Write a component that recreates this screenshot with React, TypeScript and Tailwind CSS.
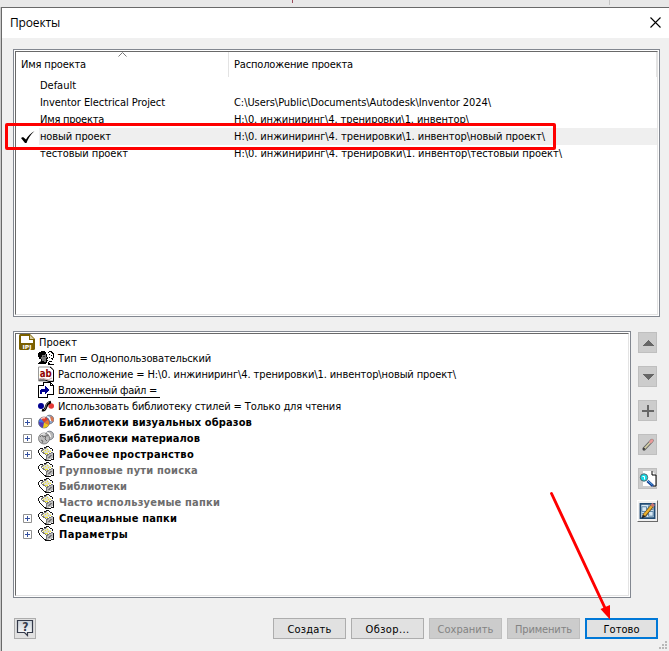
import { useLayoutEffect, useRef, type ReactNode } from "react";

const UI = "[font-family:'DejaVu_Sans_Condensed','DejaVu_Sans',sans-serif] [font-stretch:condensed]";

/* Text run whose letter spacing is adjusted so that it takes the given width. */
function Fit({ w, children, className = "" }: { w: number; children: string; className?: string }) {
  const ref = useRef<HTMLSpanElement>(null);
  useLayoutEffect(() => {
    const el = ref.current;
    if (!el) return;
    el.style.letterSpacing = "0px";
    const natural = el.getBoundingClientRect().width;
    el.style.letterSpacing = `${(w - natural) / children.length}px`;
  }, [w, children]);
  return (
    <span ref={ref} className={`inline-block shrink-0 whitespace-pre ${className}`}>
      {children}
    </span>
  );
}

function Sunken({ className, children }: { className: string; children: ReactNode }) {
  return (
    <div className={`border border-[#828790] bg-white p-px ${className}`}>
      <div className="h-full border border-t-[#696969] border-r-[#e3e3e3] border-b-[#e3e3e3] border-l-[#696969]">
        {children}
      </div>
    </div>
  );
}

const projects = [
  { name: "Default", nw: 36, path: "", pw: 0 },
  { name: "Inventor Electrical Project", nw: 125, path: "C:\\Users\\Public\\Documents\\Autodesk\\Inventor 2024\\", pw: 257 },
  { name: "Имя проекта", nw: 64, path: "H:\\0. инжиниринг\\4. тренировки\\1. инвентор\\", pw: 235 },
  { name: "новый проект", nw: 71, path: "H:\\0. инжиниринг\\4. тренировки\\1. инвентор\\новый проект\\", pw: 311, active: true },
  { name: "тестовый проект", nw: 88, path: "H:\\0. инжиниринг\\4. тренировки\\1. инвентор\\тестовый проект\\", pw: 328 },
];

const svg = "block h-4 w-4 shrink-0";

function IpjIcon() {
  return (
    <svg className="block h-4 w-4 shrink-0" viewBox="0 0 16 16">
      <path d="M0 1.500Q0 0 1.500 0H11l5 5v9.500Q16 16 14.500 16H1.500Q0 16 0 14.500Z" fill="#7a6000" />
      <path d="M2 2h8v4h4v3H2Z" fill="#fff" />
      <path d="M11 1v4h4Z" fill="#d8cda0" />
      <text x="8" y="14.500" textAnchor="middle" fontSize="5.500" fontWeight="bold" fill="#fff" fontFamily="DejaVu Sans" textLength="9" lengthAdjust="spacingAndGlyphs">IPJ</text>
    </svg>
  );
}
function FacesIcon() {
  return (
    <svg className={svg} viewBox="0 0 16 16" shapeRendering="crispEdges">
      <path d="M8 1h6l2 2v6l-2 4-3 1H8Z" fill="#fff" />
      <path d="M1 3h1V2h5v1h1v4h1v2H8v3H7v1H2v-2h1V9H2V8H1V6H0V4h1Z" fill="#777" />
      <path d="M1 2h2V1h4v1h1v2H7v1H4v2H3v2H1V7H0V3h1Z" fill="#000" />
      <path d="M8 4h1v3h1v2H9v1h1v1H9v2H7v-1h1V8h1V7H8ZM3 9h1v2h2v1h1v1h1v1H0v-1h1v-1h2Z" fill="#000" />
      <path d="M10 2h1V1h3v1h1v1h1v5h-1v2h-1V8h1V4h-1V3h-1V2h-2v1h-1ZM11 4h1v1h-1m2 0h1v1h-1m-2 1h1v1h-1m2 0h1v1h-1m-2 2h3v1h-3v1h1v1h2v1h-4v-3h1m3 2h2v1h-2Z" fill="#000" />
      <path d="M5 6h2v1H5" fill="#333" />
    </svg>
  );
}
function AbIcon() {
  return (
    <svg className={svg} viewBox="0 0 16 16">
      <path d="M.5 1H13l2.500 3v11H.5Z" fill="#fff" stroke="#999" />
      <path d="M12 1l3.500 3v11.500H11L7 14H1" fill="none" stroke="#000" />
      <path d="M1 13q3-2 6 0t7-1" fill="none" stroke="#c8a0a0" />
      <text x="7.800" y="10.500" textAnchor="middle" fontSize="10" fontWeight="bold" fill="#900000" fontFamily="DejaVu Sans" textLength="12" lengthAdjust="spacingAndGlyphs">ab</text>
    </svg>
  );
}
function IncludeIcon() {
  return (
    <svg className={svg} viewBox="0 0 16 16" shapeRendering="crispEdges">
      <path d="M5.500.5h7l3 3v9h-10Z" fill="#fff" stroke="#000" />
      <path d="M12.500.5v3h3" fill="none" stroke="#000" />
      <path d="M5 3.500H.5v12h9V12" fill="#fff" stroke="#000" />
      <path d="M1 4h7v11H1Z" fill="#fff" />
      <path d="M2 12V9q0-2 2-2h3V3.500L12 8l-5 4.500V9.500H4V12Z" fill="#000090" />
    </svg>
  );
}
function StylesIcon() {
  return (
    <svg className={svg} viewBox="0 0 16 16">
      <circle cx="3" cy="8" r="3" fill="#000090" />
      <circle cx="13.200" cy="8" r="2.800" fill="#e53935" />
      <path d="M4 12q3 1 4-3t5-5" fill="none" stroke="#000" strokeWidth="2.600" />
      <path d="M6 12q2-1 2-4t3-4" fill="none" stroke="#777" />
    </svg>
  );
}
function BallsIcon({ gray = false }: { gray?: boolean }) {
  return (
    <svg className={svg} viewBox="0 0 16 16">
      <circle cx="11.500" cy="5.500" r="4.300" fill={gray ? "#b8b8b8" : "#8faad0"} stroke="#555e6a" strokeWidth=".7" />
      {!gray && <path d="M12.500 6V2a4 4 0 0 1 2.500 6Z" fill="#df7549" />}
      <path d="M8.500 3q3-1 4 4" fill="none" stroke="#fff" strokeWidth="1.200" />
      <circle cx="6" cy="8.500" r="5.500" fill={gray ? "#bdbdbd" : "#3b62d8"} stroke="#666" strokeWidth=".7" />
      {gray ? (
        <path d="M2 7l2-2 1 2 3-1-1 3 2 2m-6-1 2 1-1 2m4-8 2 1" fill="none" stroke="#555" strokeWidth=".8" />
      ) : (
        <>
          <path d="M6 8.500L1 8q0 4 4 5.500Z" fill="#5a35b0" />
          <path d="M6 8.500L5 14q4 0 6-3Z" fill="#f0c81c" />
          <path d="M6 8.500L11 11q1-3-1-5.500Z" fill="#e87a28" />
          <path d="M6 8.500L10 5Q6 1 2 5Z" fill="#e3412d" />
          <path d="M6 8.500L3 4.500Q1 6 1 8Z" fill="#3d7be0" />
        </>
      )}
      <path d="M3 5q2-2 4-1" fill="none" stroke="#fff" strokeOpacity=".7" strokeWidth="1.500" />
    </svg>
  );
}
function FoldersIcon() {
  return (
    <svg className={svg} viewBox="0 0 16 16" shapeRendering="crispEdges">
      <path d="M1 4l2-2h3l2-1h3l1 2 3 2v6l-7 4-3-2-4-5Z" fill="#fff" />
      <path d="M4 5l5-3 5 3-6 4Z" fill="#deded0" />
      <path d="M8 9l7-3v6l-7 3Z" fill="#bcbcbc" />
      <path d="M5 5h1v1H5m2-2h1v1H7m2-2h1v1H9m-1 3h2v1H8M6 7h2v1H6m4-3h1v1h-1m1 1h2v1h-2m1-3h1v1h-1M9 7h1v1H9" fill="#f0e52a" />
      <path d="M8.500 15V9.500L15 6M3 5l5 4M3 5l6-4m3 9 2-1m-4 3 3-2" fill="none" stroke="#777" />
      <path d="M0 4h1v3H0M1 7h1v2H1m1 0h1v1H2m1 0h1v1H3m1 0h1v1H4m1 0h1v1H5m1 0h2v1H6m1 0h4v1H7m4-1h2v1h-2m2-2h2v1h-2m2-7h1v7h-1M1 3h1v1H1m1-2h2v1H2m2-1h1v1H4m2-2h2v1H6m2-2h3v1H8m3 0h1v1h-1m1 0h2v1h-2m2 0h1v2h-1" fill="#111" />
    </svg>
  );
}

type Node = { t: string; w: number; icon: ReactNode; bold?: boolean; gray?: boolean; plus?: boolean; line?: boolean };
const nodes: Node[] = [
  { t: "Тип = Однопользовательский", w: 153, icon: <FacesIcon /> },
  { t: "Расположение = H:\\0. инжиниринг\\4. тренировки\\1. инвентор\\новый проект\\", w: 398, icon: <AbIcon /> },
  { t: "Вложенный файл = ", w: 102, icon: <IncludeIcon />, line: true },
  { t: "Использовать библиотеку стилей = Только для чтения", w: 283, icon: <StylesIcon /> },
  { t: "Библиотеки визуальных образов", w: 193, icon: <BallsIcon />, bold: true, plus: true },
  { t: "Библиотеки материалов", w: 141, icon: <BallsIcon gray />, bold: true, plus: true },
  { t: "Рабочее пространство", w: 135, icon: <FoldersIcon />, bold: true, plus: true },
  { t: "Групповые пути поиска", w: 139, icon: <FoldersIcon />, bold: true, gray: true },
  { t: "Библиотеки", w: 68, icon: <FoldersIcon />, bold: true, gray: true },
  { t: "Часто используемые папки", w: 161, icon: <FoldersIcon />, bold: true, gray: true },
  { t: "Специальные папки", w: 118, icon: <FoldersIcon />, bold: true, plus: true },
  { t: "Параметры", w: 69, icon: <FoldersIcon />, bold: true, plus: true },
];

const tools: ReactNode[] = [
  <path key="u" d="M5 14h11v-1h-1v-1h-1v-1h-1v-1h-1v-1h-1V8h-1v1H9v1H8v1H7v1H6v1H5Z" fill="#666" />,
  <path key="d" d="M5 8h11v1h-1v1h-1v1h-1v1h-1v1h-1v1h-1v-1H9v-1H8v-1H7v-1H6V9H5Z" fill="#666" />,
  <path key="p" d="M4 10h5V5h2v5h5v2h-5v5H9v-5H4Z" fill="#666" />,
  <g key="e" shapeRendering="auto">
    <path d="M6 15L14 6.500" stroke="#666" strokeWidth="3.400" strokeLinecap="round" />
    <path d="M6.500 14.500L13 7.500" stroke="#d5d0a8" strokeWidth="1.800" />
    <path d="M12.500 8L14 6.500" stroke="#e99a9a" strokeWidth="2.600" strokeLinecap="round" />
    <path d="M5 16l.5-2.500 2 1.500Z" fill="#333" />
  </g>,
  <g key="s" shapeRendering="auto">
    <path d="M5 3h9l4 4v11H5Z" fill="#fff" />
    <path d="M14 3v4h4v11h-3" fill="none" stroke="#000" />
    <circle cx="6" cy="9.500" r="3.700" fill="#18dce8" stroke="#526970" />
    <path d="M4.500 8.500h2v3" stroke="#fff" fill="none" />
    <path d="M9.500 13l5.500 5" stroke="#123d92" strokeWidth="3" />
    <path d="M10 13l4.500 4" stroke="#5db9ef" />
  </g>,
];

function HelpIcon() {
  return (
    <svg className="block h-[19px] w-5" viewBox="0 0 20 19">
      <defs>
        <linearGradient id="helpFill" x2="0" y2="1"><stop stopColor="#ccd3da" /><stop offset="1" stopColor="#fff" /></linearGradient>
      </defs>
      <path d="M2.500 1.500h15v12h-5v3l-3-3h-7Z" fill="url(#helpFill)" stroke="#343a4a" strokeWidth="1.200" />
      <text x="10.300" y="12" textAnchor="middle" fontSize="12" fontWeight="bold" fontFamily="DejaVu Sans" fill="#343a4a">?</text>
    </svg>
  );
}

function EditorIcon() {
  return (
    <svg className="block h-[18px] w-[17px]" viewBox="0 0 18 19">
      <path d="M1.500 2h15v15h-15Z" fill="#d7e8f3" stroke="#204b74" strokeWidth="1.800" />
      <path d="M3 5h5v5H3Zm7-1h5v4h-5ZM3 12h5v3H3m7-5h5v5h-5ZM8 7h3m-3 6h3" fill="none" stroke="#5581a5" />
      <path d="M5 15L14 4" stroke="#654713" strokeWidth="3.800" />
      <path d="M5.500 14L13.500 4.500" stroke="#edb22f" strokeWidth="2.400" />
      <path d="M13.500 4.500L15.500 2" stroke="#c67675" strokeWidth="3.600" />
      <path d="M3 17.500l.8-4 3 2Z" fill="#222" />
    </svg>
  );
}

const buttons = [
  { t: "Создать", w: 44, c: "border-[#adadad] bg-[#e1e1e1] text-black border" },
  { t: "Обзор...", w: 44, c: "border-[#adadad] bg-[#e1e1e1] text-black border" },
  { t: "Сохранить", w: 56, c: "border-[#bfbfbf] bg-[#cccccc] text-[#838383] border" },
  { t: "Применить", w: 57, c: "border-[#bfbfbf] bg-[#cccccc] text-[#838383] border" },
  { t: "Готово", w: 36, c: "border-[#0078d7] bg-[#e1e1e1] text-black border-2" },
];

export default function App() {
  return (
    <div className={`relative flex h-[651px] w-[669px] flex-col overflow-hidden bg-[#c9c9c9] text-[11px] text-black ${UI}`}>
      <div className="flex h-[7px] shrink-0 bg-[#e8e8e8]">
        <div className="ml-[292px] h-[3px] w-px bg-[#9a4b5b]" />
        <div className="ml-[316px] h-[5px] w-px bg-[#c5c5c5]" />
      </div>
      <div className="ml-px flex flex-1 flex-col border-t border-l border-[#696969] bg-[#f0f0f0]">
        <header className="flex h-[30px] shrink-0 items-center justify-between bg-white pr-2 pl-2 text-[12px] [font-family:'Open_Sans','Noto_Sans',sans-serif] [font-stretch:normal]">
          <Fit w={50}>Проекты</Fit>
          <svg className="mb-[2px] h-[11px] w-[11px]" viewBox="0 0 11 11"><path d="M.5.5l10 10m0-10l-10 10" stroke="#000" strokeWidth="1.100" fill="none" /></svg>
        </header>

        <Sunken className="mt-[11px] ml-[11px] h-[268px] w-[647px] shrink-0">
          <div className="flex h-[25px]">
            <div className="flex w-[213px] flex-col border-r border-[#e3e3e3] pl-[5px]">
              <svg className="ml-[97px] h-[5px] w-[9px] shrink-0" viewBox="0 0 9 5"><path d="M.5 4.500l4-4 4 4" fill="none" stroke="#777" /></svg>
              <Fit w={65} className="self-start pt-px leading-[14px]">Имя проекта</Fit>
            </div>
            <div className="flex-1 border-r border-[#e3e3e3] pt-[5px] pl-[5px]"><Fit w={119} className="leading-[14px]">Расположение проекта</Fit></div>
          </div>
          {projects.map((p) => (
            <div key={p.name} className="flex h-[17px] leading-[17px]">
              <div className="flex w-[23px] items-center pl-[5px]">
                {p.active && <svg className="h-3 w-[14px]" viewBox="0 0 14 12"><path d="M0 7l2-1 3 2.500Q8 3 13.500 0 8 5 5.500 12H4Z" fill="#000" /></svg>}
              </div>
              <div className={`flex flex-1 ${p.active ? "bg-[#efefef]" : ""}`}>
                <div className="w-[195px] pl-px"><Fit w={p.nw}>{p.name}</Fit></div>
                {p.path && <Fit w={p.pw}>{p.path}</Fit>}
              </div>
            </div>
          ))}
        </Sunken>

        <div className="mt-[14px] flex h-[267px] shrink-0">
          <Sunken className="ml-[11px] h-[267px] w-[618px]">
            <div className="flex h-4 items-center pl-[3px]">
              <IpjIcon /><Fit w={38} className="ml-1 h-[15px] leading-[16px]">Проект</Fit>
            </div>
            {nodes.map((n) => (
              <div key={n.t} className="flex h-4 items-center pl-[7px]">
                <div className="w-[15px] shrink-0">
                  {n.plus && <svg className="block h-[9px] w-[9px]" viewBox="0 0 9 9"><path d="M.5.5h8v8h-8Z" fill="#fff" stroke="#919191" /><path d="M2 4.500h5M4.500 2v5" stroke="#3450a0" /></svg>}
                </div>
                {n.icon}
                <Fit w={n.w} className={`h-[15px] leading-[16px] ${n.bold ? "ml-[5px] font-bold" : "ml-1"} ${n.gray ? "text-[#6d6d6d]" : ""} ${n.line ? "border-b border-black" : ""}`}>{n.t}</Fit>
              </div>
            ))}
          </Sunken>
          <div className="flex w-[33px] flex-col items-center">
            <div className="mt-px flex flex-col gap-[13px]">
              {tools.map((g, i) => (
                <div key={i} className="h-[21px] w-[19px] border border-[#bfbfbf] bg-[#ccc]">
                  <svg className="-m-px block h-[21px] w-[19px]" viewBox="0 0 19 21" shapeRendering="crispEdges">{g}</svg>
                </div>
              ))}
            </div>
            <div className="mt-[11px] h-[22px] w-[21px] border border-t-white border-r-[#696969] border-b-[#696969] border-l-white bg-[#f0f0f0] p-px">
              <EditorIcon />
            </div>
          </div>
        </div>

        <footer className="mt-5 flex h-[33px] items-start">
          <div className="ml-3 h-[21px] w-[22px] border border-[#adadad] bg-[#e1e1e1]"><HelpIcon /></div>
          <div className="ml-[237px] flex gap-[5px]">
            {buttons.map((b) => (
              <div key={b.t} className={`flex h-[21px] w-[73px] items-center justify-center ${b.c}`}><Fit w={b.w} className="pt-[2px] leading-[15px]">{b.t}</Fit></div>
            ))}
          </div>
          <svg className="mt-[23px] ml-px h-[9px] w-[9px]" viewBox="0 0 9 9" shapeRendering="crispEdges"><path d="M6 0h2v2H6ZM3 3h2v2H3Zm3 0h2v2H6ZM0 6h2v2H0Zm3 0h2v2H3Zm3 0h2v2H6Z" fill="#b8b8b8" /></svg>
        </footer>
      </div>

      <div className="absolute top-[123px] left-[5px] h-[27px] w-[551px] rounded-[2px] border-3 border-[#fe0000]" />
      <svg className="absolute top-[490px] left-[545px] h-[132px] w-[72px]" viewBox="0 0 72 132">
        <path d="M6.500 3.500L60 118" stroke="#fe0000" strokeWidth="2.900" strokeLinecap="round" />
        <path d="M55.500 119L65 115v14.500Z" fill="#fe0000" />
      </svg>
    </div>
  );
}
